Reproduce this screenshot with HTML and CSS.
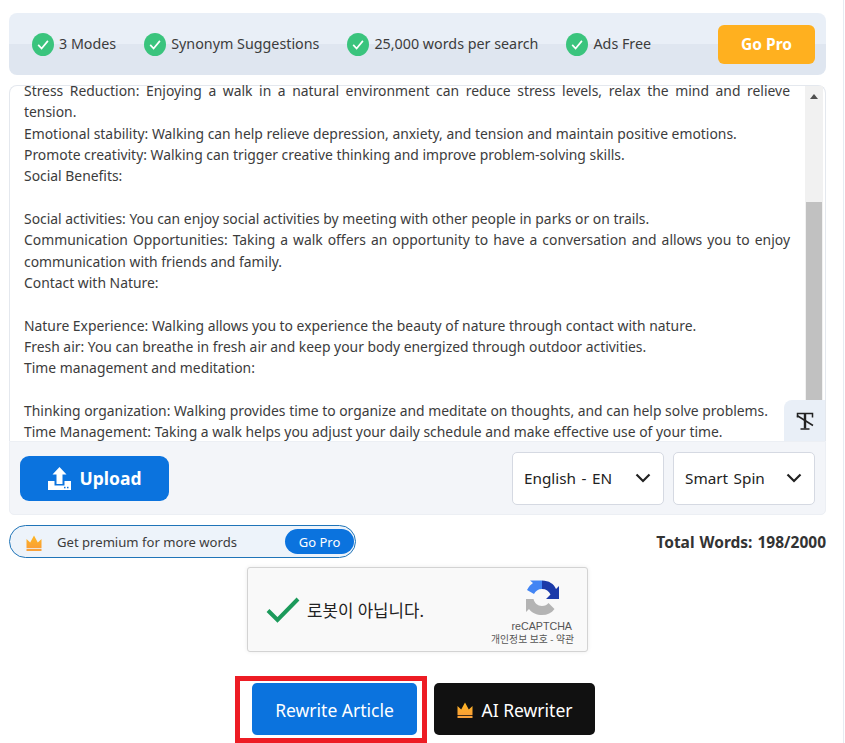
FILE: index.html
```html
<!DOCTYPE html>
<html lang="en">
<head>
    <meta charset="UTF-8">
    <meta name="viewport" content="width=device-width, initial-scale=1.0">
    <title>Article Rewriter</title>
    <link rel="stylesheet" href="styles.css">
</head>
<body>
    <svg class="defs" width="0" height="0" aria-hidden="true">
        <defs>
            <linearGradient id="crownFill" x1="0" y1="0" x2="0" y2="1">
                <stop offset="0" stop-color="#fdb723"/>
                <stop offset="1" stop-color="#fa9f35"/>
            </linearGradient>
        </defs>
        <symbol id="check" viewBox="0 0 22 23">
            <ellipse cx="11" cy="11.5" rx="11" ry="11.5" fill="#3ac47d"/>
            <path d="M6.2 11.8l3.4 3.7 6.3-7.6" fill="none" stroke="#fff" stroke-width="1.7"/>
        </symbol>
        <symbol id="crown" viewBox="0 0 16 16">
            <path d="M0.5 4l3.7 3.500L8 0.500l3.800 7L15.500 4v9H0.500z" fill="url(#crownFill)"/>
            <rect x="0.500" y="13.800" width="15" height="2.200" fill="#f9a13a"/>
        </symbol>
    </svg>

    <div class="page">
        <div class="features">
            <div class="feature"><svg class="check"><use href="#check"/></svg><span>3 Modes</span></div>
            <div class="feature"><svg class="check"><use href="#check"/></svg><span>Synonym Suggestions</span></div>
            <div class="feature"><svg class="check"><use href="#check"/></svg><span>25,000 words per search</span></div>
            <div class="feature"><svg class="check"><use href="#check"/></svg><span>Ads Free</span></div>
            <button class="go-pro">Go Pro</button>
        </div>

        <div class="editor">
            <div class="editor-text">
                <p>Stress Reduction: Enjoying a walk in a natural environment can reduce stress levels, relax the mind and relieve tension.</p>
                <p>Emotional stability: Walking can help relieve depression, anxiety, and tension and maintain positive emotions.</p>
                <p>Promote creativity: Walking can trigger creative thinking and improve problem-solving skills.</p>
                <p>Social Benefits:</p>
                <p class="blank"></p>
                <p>Social activities: You can enjoy social activities by meeting with other people in parks or on trails.</p>
                <p>Communication Opportunities: Taking a walk offers an opportunity to have a conversation and allows you to enjoy communication with friends and family.</p>
                <p>Contact with Nature:</p>
                <p class="blank"></p>
                <p>Nature Experience: Walking allows you to experience the beauty of nature through contact with nature.</p>
                <p>Fresh air: You can breathe in fresh air and keep your body energized through outdoor activities.</p>
                <p>Time management and meditation:</p>
                <p class="blank"></p>
                <p>Thinking organization: Walking provides time to organize and meditate on thoughts, and can help solve problems.</p>
                <p>Time Management: Taking a walk helps you adjust your daily schedule and make effective use of your time.</p>
            </div>
            <div class="scrollbar">
                <span class="scroll-up"></span>
                <span class="scroll-thumb"></span>
            </div>
            <div class="font-toggle">
                <svg width="20" height="20" viewBox="0 0 20 20" fill="none" stroke="#222">
                    <path d="M2.500 6.500V2.500h15v4" stroke-width="1.500"/>
                    <path d="M10 2.500V17.500" stroke-width="2.400"/>
                    <path d="M5.500 18h9" stroke-width="1.500"/>
                    <path d="M2 4.500L18 14.500" stroke-width="1.500"/>
                </svg>
            </div>
        </div>

        <div class="toolbar">
            <button class="upload">
                <svg width="23" height="23" viewBox="0 0 23 23" fill="#fff">
                    <path d="M11.500 0l7 7.500h-4V17h-6V7.500h-4z"/>
                    <path d="M0 14h6.500v4.500h10V14H23v9H0z"/>
                    <rect x="16" y="19.800" width="1.500" height="1.500" fill="#0b73de"/>
                    <rect x="19" y="19.800" width="1.500" height="1.500" fill="#0b73de"/>
                </svg>
                Upload
            </button>
            <div class="selects">
                <div class="select select-lang">English - EN<svg class="chevron" viewBox="0 0 16 10"><path d="M1.500 1.500L8 8l6.500-6.500"/></svg></div>
                <div class="select select-mode">Smart Spin<svg class="chevron" viewBox="0 0 16 10"><path d="M1.500 1.500L8 8l6.500-6.500"/></svg></div>
            </div>
        </div>

        <div class="status">
            <div class="promo">
                <svg class="crown-small"><use href="#crown"/></svg>
                <span class="promo-text">Get premium for more words</span>
                <span class="promo-btn">Go Pro</span>
            </div>
            <div class="total">Total Words: 198/2000</div>
        </div>

        <div class="captcha">
            <svg class="captcha-tick" width="34" height="26" viewBox="0 0 34 26"><path d="M2 13.500L11.500 23 32 2" fill="none" stroke="#1c9a5b" stroke-width="4"/></svg>
            <span class="captcha-label">로봇이 아닙니다.</span>
            <div class="captcha-brand">
                <svg width="34" height="36" viewBox="0 0 34 36">
                    <path d="M17 0.500C24 0.500 29 4 31 9l3-3v13H21l4.500-4.500C24 11 21 9 17 9z" fill="#1c3aa9"/>
                    <path d="M17 0.500V9c-4 0-6.500 2-8 5l-7-4C4 6 6 4.500 8 3L5 0.500h12z" fill="#4285f4"/>
                    <path d="M0 19h8.500c1 4 4 7 8.500 7 3 0 5-1 6.500-3l6 6c-3 4-7 6-12.500 6-5 0-10-2-13-6l-3 3V19z" fill="#b4b4b4"/>
                </svg>
                <span class="captcha-name">reCAPTCHA</span>
                <span class="captcha-links">개인정보 보호 - 약관</span>
            </div>
        </div>

        <div class="actions">
            <div class="highlight"><button class="rewrite">Rewrite Article</button></div>
            <button class="ai-rewriter"><svg class="crown-big"><use href="#crown"/></svg>AI Rewriter</button>
        </div>
    </div>
</body>
</html>
```

FILE: styles.css
```css
* {
    margin: 0;
    padding: 0;
    box-sizing: border-box;
    font-family: "Noto Sans", "Noto Sans CJK KR", sans-serif;
}

html, body {
    height: 100%;
    overflow: hidden;
    background-color: #ffffff;
}

.defs {
    position: absolute;
}

button {
    border: none;
    cursor: pointer;
}

.page {
    width: 844px;
    height: 743px;
    padding: 13px 17px 0 9px;
    border-right: 1px solid #e6ebf2;
}

/* top strip */
.features {
    display: flex;
    align-items: center;
    height: 62px;
    padding: 0 11px 0 23px;
    border-radius: 8px;
    background: linear-gradient(#e9eff7 50%, #dfe6f0 50%);
}

.feature {
    display: flex;
    align-items: center;
    gap: 5px;
    margin-right: 28px;
    color: #3c3c3c;
    font-size: 14.300px;
    line-height: 23px;
    white-space: nowrap;
}

.feature span {
    margin-top: -2px;
}

.check {
    width: 22px;
    height: 23px;
    flex-shrink: 0;
}

.go-pro {
    width: 97px;
    height: 39px;
    margin-left: auto;
    border-radius: 6px;
    background-color: #ffb01f;
    color: #fff;
    font-size: 15.500px;
    font-weight: 700;
}

/* editor */
.editor {
    position: relative;
    display: flex;
    height: 356px;
    margin-top: 10px;
    border: 1px solid #e4e8ee;
    border-bottom: none;
    border-radius: 8px 8px 0 0;
}

.editor-text {
    flex: 1;
    margin-top: -6px;
    padding: 0 15px 0 14px;
    color: #3c3c3c;
    font-size: 13.900px;
    line-height: 21.330px;
    text-align: justify;
}

.blank {
    height: 21.330px;
}

.scrollbar {
    display: flex;
    flex-direction: column;
    align-items: center;
    width: 18px;
    margin-right: 2px;
    background-color: #f1f1f1;
}

.scroll-up {
    margin-top: 8px;
    border: 4px solid transparent;
    border-top: none;
    border-bottom: 5px solid #505050;
}

.scroll-thumb {
    width: 16px;
    height: 198px;
    margin-top: 103px;
    background-color: #c1c1c1;
}

.font-toggle {
    position: absolute;
    right: 0;
    bottom: 0;
    display: flex;
    align-items: center;
    justify-content: center;
    width: 41px;
    height: 41px;
    border-radius: 8px 0 0 0;
    background-color: #e9eff7;
}

/* toolbar */
.toolbar {
    display: flex;
    align-items: center;
    justify-content: space-between;
    height: 74px;
    padding: 0 10px 0 10px;
    border: 1px solid #eceff4;
    border-radius: 0 0 5px 5px;
    background-color: #f3f5f9;
}

.upload {
    display: flex;
    align-items: center;
    justify-content: center;
    gap: 9px;
    width: 149px;
    height: 45px;
    border-radius: 9px;
    background-color: #0b73de;
    color: #fff;
    font-size: 17.500px;
    font-weight: 700;
}

.selects {
    display: flex;
    gap: 9px;
}

.select {
    display: flex;
    align-items: center;
    justify-content: space-between;
    height: 53px;
    padding: 0 12px 0 11px;
    border: 1px solid #d5d9e2;
    border-radius: 5px;
    background-color: #fff;
    color: #222;
    font-size: 15.300px;
    word-spacing: 1.500px;
}

.select-lang {
    width: 152px;
}

.select-mode {
    width: 142px;
}

.chevron {
    width: 16px;
    height: 10px;
    fill: none;
    stroke: #222;
    stroke-width: 2.200;
}

/* premium row */
.status {
    display: flex;
    align-items: center;
    justify-content: space-between;
    margin-top: 10px;
}

.promo {
    display: flex;
    align-items: center;
    width: 347px;
    height: 33px;
    padding: 0 1px 0 16px;
    border: 1px solid #1f74b8;
    border-radius: 17px;
    background-color: #edf3fa;
}

.crown-small {
    width: 16px;
    height: 16px;
    margin-top: 2px;
}

.promo-text {
    margin-left: 15px;
    color: #3c3c3c;
    font-size: 13.100px;
}

.promo-btn {
    display: flex;
    align-items: center;
    justify-content: center;
    width: 69px;
    height: 25px;
    margin-left: auto;
    border-radius: 13px;
    background-color: #0b73de;
    color: #fff;
    font-size: 13px;
}

.total {
    color: #333;
    font-size: 15.500px;
    font-weight: 700;
    word-spacing: 1px;
}

/* captcha */
.captcha {
    display: flex;
    align-items: center;
    width: 341px;
    height: 85px;
    margin: 9px auto 0;
    padding: 0 13px 0 18px;
    border: 1px solid #d3d3d3;
    border-radius: 3px;
    background-color: #f9f9f9;
    box-shadow: 0 0 4px rgba(0, 0, 0, 0.08);
}

.captcha-label {
    margin-left: 7px;
    color: #222;
    font-size: 16.800px;
}

.captcha-brand {
    display: flex;
    flex-direction: column;
    align-items: flex-end;
    margin-top: 8px;
    margin-left: auto;
    color: #555;
}

.captcha-brand svg {
    margin-right: 15px;
}

.captcha-name {
    margin-top: 3px;
    margin-right: 2px;
    font-family: "Liberation Sans", sans-serif;
    font-size: 10.700px;
    line-height: 14px;
}

.captcha-links {
    font-size: 9.800px;
    line-height: 14px;
    white-space: nowrap;
}

/* bottom buttons */
.actions {
    display: flex;
    align-items: flex-start;
    justify-content: center;
    gap: 7px;
    margin-top: 24px;
    padding-right: 5px;
}

.highlight {
    padding: 2px 5px 3px 12px;
    border: 5px solid #ed1c24;
}

.rewrite,
.ai-rewriter {
    height: 52px;
    padding-top: 1px;
    border-radius: 5px;
    color: #fff;
    font-size: 17.500px;
}

.rewrite {
    width: 165px;
    background-color: #0b73de;
}

.ai-rewriter {
    display: flex;
    align-items: center;
    justify-content: center;
    gap: 9px;
    width: 161px;
    margin-top: 7px;
    background-color: #111111;
}

.crown-big {
    width: 16px;
    height: 16px;
}
```
